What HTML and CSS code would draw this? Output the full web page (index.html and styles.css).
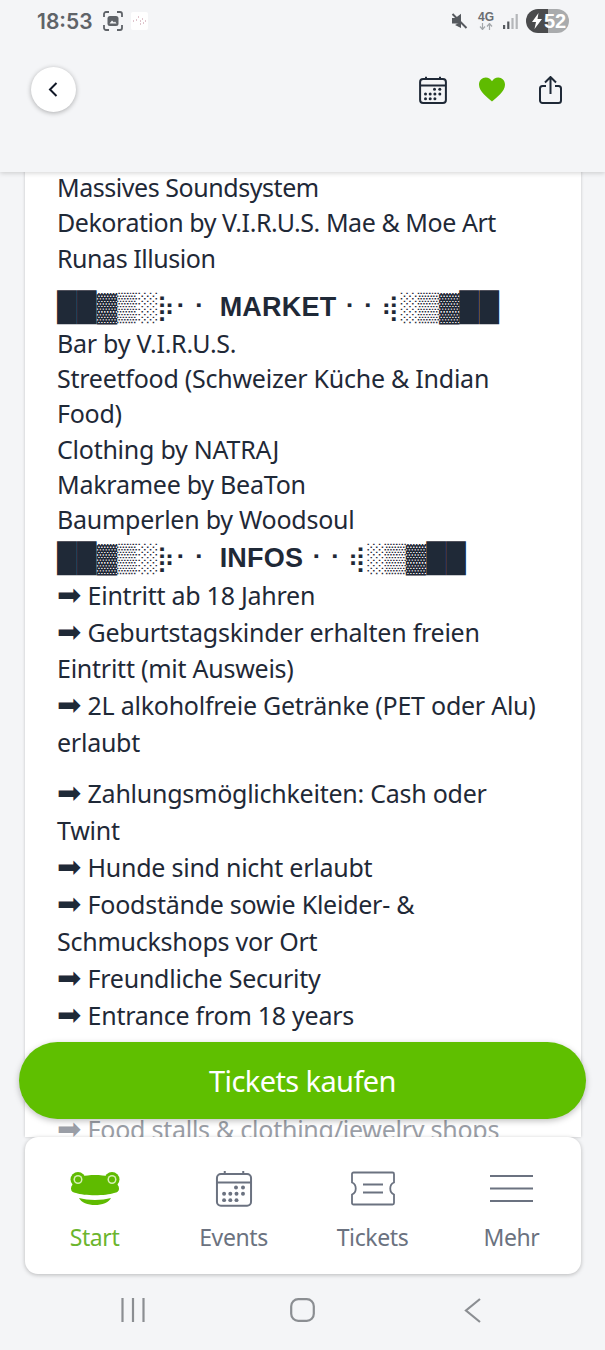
FILE: index.html
```html
<!DOCTYPE html>
<html lang="en">
<head>
    <meta charset="UTF-8">
    <meta name="viewport" content="width=device-width, initial-scale=1.0">
    <title>Event</title>
    <link rel="stylesheet" href="styles.css">
</head>
<body>
    <svg class="defs" width="0" height="0">
        <symbol id="calendar" viewBox="0 0 28 28">
            <rect x="1.1" y="3" width="25.8" height="24" rx="3" fill="none" stroke="currentColor" stroke-width="2" vector-effect="non-scaling-stroke"/>
            <path d="M1 9.5H27M7 .8V3M21 .8V3" fill="none" stroke="currentColor" stroke-width="2" vector-effect="non-scaling-stroke"/>
            <g fill="currentColor">
                <circle cx="15.5" cy="13.2" r="1.5"/><circle cx="20.8" cy="13.2" r="1.5"/>
                <circle cx="6.5" cy="18" r="1.5"/><circle cx="11.2" cy="18" r="1.5"/><circle cx="15.9" cy="18" r="1.5"/><circle cx="20.8" cy="18" r="1.5"/>
                <circle cx="6.5" cy="22.8" r="1.5"/><circle cx="11.2" cy="22.8" r="1.5"/><circle cx="15.9" cy="22.8" r="1.5"/>
            </g>
        </symbol>
    </svg>

    <header class="topbar">
        <div class="statusbar">
            <div class="status-left">
                <span class="time">18:53</span>
                <svg class="shot-icon" width="20" height="20" viewBox="0 0 20 20">
                    <path d="M1 6V3a2 2 0 0 1 2-2h3M14 1h3a2 2 0 0 1 2 2v3M19 14v3a2 2 0 0 1-2 2h-3M6 19H3a2 2 0 0 1-2-2v-3" fill="none" stroke="#5f6368" stroke-width="1.8"/>
                    <rect x="4.5" y="5" width="11" height="10" rx="2.5" fill="#5f6368"/>
                    <path d="M6.5 12.5l2.5-3 2 2 1-1 1.5 2z" fill="#f4f5f7"/>
                </svg>
                <svg class="thumb" width="17" height="18" viewBox="0 0 17 18">
                    <rect width="17" height="18" rx="2" fill="#fff"/>
                    <path d="M2 9h1M5 8h1M7 5h1M9 9h1M11 7h1M12 11h1M14 9h1M9 12h1" stroke="#c08a9a" stroke-width="1"/>
                </svg>
            </div>
            <div class="status-right">
                <svg width="17" height="16" viewBox="0 0 17 16">
                    <path d="M1 5h3.5L10 .8V11L4.5 10.5H1z" fill="#55595e"/>
                    <path d="M1.5 1l14 14" stroke="#55595e" stroke-width="2"/>
                    <path d="M4 12l6 3V9z" fill="#55595e"/>
                </svg>
                <div class="net">
                    <span class="net-label">4G</span>
                    <svg width="14" height="7" viewBox="0 0 14 7">
                        <path d="M3.5 0v6M1 3.5L3.5 6.5 6 3.5" fill="none" stroke="#a4a7aa" stroke-width="1.2"/>
                        <path d="M10.5 7V1M8 3.5L10.5 .5 13 3.5" fill="none" stroke="#a4a7aa" stroke-width="1.2"/>
                    </svg>
                </div>
                <svg width="15" height="15" viewBox="0 0 15 15">
                    <rect x="0" y="11" width="2.2" height="4" fill="#55595e"/>
                    <rect x="4.2" y="7.5" width="2.2" height="7.5" fill="#55595e"/>
                    <rect x="8.4" y="4" width="2.2" height="11" fill="#b4b6b9"/>
                    <rect x="12.6" y="0" width="2.2" height="15" fill="#b4b6b9"/>
                </svg>
                <div class="battery">
                    <svg width="10" height="16" viewBox="0 0 10 16"><path d="M6.5 0L0 9h4L2.5 16 10 6H5.5z" fill="#fff"/></svg>
                    <span class="battery-num">52</span>
                </div>
            </div>
        </div>
        <div class="toolbar">
            <button class="back-btn">
                <svg width="10" height="15" viewBox="0 0 10 15"><path d="M8.5 1L2 7.5 8.5 14" fill="none" stroke="#111827" stroke-width="2"/></svg>
            </button>
            <div class="toolbar-actions">
                <svg class="cal-dark" width="28" height="28"><use href="#calendar"/></svg>
                <svg class="heart" width="26" height="25" viewBox="0 0 27 25">
                    <path d="M13.5 25C9 20.500 0 15 0 7.500 0 3 3.200 0 7 0c2.800 0 5.200 1.500 6.500 4C14.800 1.500 17.200 0 20 0c3.800 0 7 3 7 7.500C27 15 18 20.500 13.500 25z" fill="#5fbb00"/>
                </svg>
                <svg class="share" width="23" height="28" viewBox="0 0 23 28">
                    <path d="M7 10H3.500A2.500 2.500 0 0 0 1 12.500v12A2.500 2.500 0 0 0 3.500 27h16a2.500 2.500 0 0 0 2.500-2.500v-12A2.500 2.500 0 0 0 19.500 10H16" fill="none" stroke="#1f2937" stroke-width="2"/>
                    <path d="M11.500 18V1.500M6 6.500l5.500-5.500L17 6.500" fill="none" stroke="#1f2937" stroke-width="2"/>
                </svg>
            </div>
        </div>
    </header>

    <main class="content">
        <article class="card">
            <p class="lines intro">
                Massives Soundsystem<br>
                Dekoration by V.I.R.U.S. Mae &amp; Moe Art<br>
                Runas Illusion
            </p>
            <h2 class="deco-title spaced">██▓▒░<span class="deco">⡷⠂⠂ </span><span class="deco-word">MARKET</span><span class="deco"> ⠂⠂⢾</span>░▒▓██</h2>
            <p class="lines">
                Bar by V.I.R.U.S.<br>
                Streetfood (Schweizer Küche &amp; Indian Food)<br>
                Clothing by NATRAJ<br>
                Makramee by BeaTon<br>
                Baumperlen by Woodsoul
            </p>
            <h2 class="deco-title">██▓▒░<span class="deco">⡷⠂⠂ </span><span class="deco-word">INFOS</span><span class="deco"> ⠂⠂⢾</span>░▒▓██</h2>
            <p class="lines infos">
                <span class="arrow">➡</span> Eintritt ab 18 Jahren<br>
                <span class="arrow">➡</span> Geburtstagskinder erhalten freien Eintritt (mit Ausweis)<br>
                <span class="arrow">➡</span> 2L alkoholfreie Getränke (PET oder Alu) erlaubt
            </p>
            <p class="lines infos">
                <span class="arrow">➡</span> Zahlungsmöglichkeiten: Cash oder Twint<br>
                <span class="arrow">➡</span> Hunde sind nicht erlaubt<br>
                <span class="arrow">➡</span> Foodstände sowie Kleider- &amp; Schmuckshops vor Ort<br>
                <span class="arrow">➡</span> Freundliche Security<br>
                <span class="arrow">➡</span> Entrance from 18 years
            </p>
            <p class="lines infos faded"><span class="arrow">➡</span> Food stalls &amp; clothing/jewelry shops</p>
        </article>
        <button class="buy-btn">Tickets kaufen</button>
    </main>

    <nav class="tabbar">
        <a class="tab active">
            <svg width="50" height="34" viewBox="0 0 50 34">
                <path d="M1 17C1 14 3 13 4 11L12 5C18 3 32 3 38 5L46 11C47 13 49 14 49 17C49 20 47 21 44 21.500C36 24.500 14 24.500 6 21.500C3 21 1 20 1 17Z" fill="#5fbb00"/>
                <circle cx="8" cy="8" r="7.500" fill="#5fbb00"/>
                <circle cx="42" cy="8" r="7.500" fill="#5fbb00"/>
                <circle cx="8" cy="8" r="4.500" fill="#d6efb5"/>
                <circle cx="42" cy="8" r="4.500" fill="#d6efb5"/>
                <circle cx="8" cy="8" r="3" fill="#5fbb00"/>
                <circle cx="42" cy="8" r="3" fill="#5fbb00"/>
                <path d="M9 26.500C18 29 32 29 41 26.500C39 31 32 33.500 25 33.500C18 33.500 11 31 9 26.500Z" fill="#5fbb00"/>
            </svg>
            <span>Start</span>
        </a>
        <a class="tab">
            <svg width="38" height="37"><use href="#calendar"/></svg>
            <span>Events</span>
        </a>
        <a class="tab">
            <svg width="44" height="34" viewBox="0 0 44 34">
                <path d="M2.500 1H41.500A1.500 1.500 0 0 1 43 2.500V11C38 13 38 21 43 23V31.500A1.500 1.500 0 0 1 41.500 33H2.500A1.500 1.500 0 0 1 1 31.500V23C6 21 6 13 1 11V2.500A1.500 1.500 0 0 1 2.500 1Z" fill="none" stroke="currentColor" stroke-width="1.800"/>
                <path d="M12 13H32M12 21H32" stroke="currentColor" stroke-width="1.800"/>
            </svg>
            <span>Tickets</span>
        </a>
        <a class="tab">
            <svg width="43" height="34" viewBox="0 0 43 34">
                <path d="M0 4.500H43M0 17H43M0 29.500H43" stroke="currentColor" stroke-width="2"/>
            </svg>
            <span>Mehr</span>
        </a>
    </nav>

    <div class="android-nav">
        <svg width="24" height="24" viewBox="0 0 24 24"><path d="M1.500 0V24M12 0V24M22.500 0V24" stroke="#8b8e92" stroke-width="2.200"/></svg>
        <svg width="25" height="24" viewBox="0 0 25 24"><rect x="1.200" y="1.200" width="22.600" height="21.600" rx="7" fill="none" stroke="#8b8e92" stroke-width="2.200"/></svg>
        <svg width="17" height="25" viewBox="0 0 17 25"><path d="M16 1L2 12.500 16 24" fill="none" stroke="#8b8e92" stroke-width="2.200"/></svg>
    </div>
</body>
</html>
```
FILE: styles.css
```css
* {
    box-sizing: border-box;
}
html, body {
    margin: 0;
    padding: 0;
    height: 1350px;
    overflow: hidden;
}
body {
    display: flex;
    flex-direction: column;
    background-color: #f4f5f7;
    font-family: 'Noto Sans', sans-serif;
    color: #1f2937;
}
.defs {
    position: absolute;
}

/* top */
.topbar {
    height: 172px;
    flex: none;
    background-color: #f4f5f7;
    box-shadow: 0 1px 5px rgba(0, 0, 0, 0.18);
    position: relative;
    z-index: 2;
}
.statusbar {
    height: 42px;
    display: flex;
    justify-content: space-between;
    align-items: center;
    padding: 0 36px 0 37px;
}
.status-left {
    display: flex;
    align-items: center;
}
.time {
    font-family: 'Inter', sans-serif;
    font-weight: 600;
    font-size: 21px;
    color: #5f6368;
}
.shot-icon {
    margin-left: 10px;
}
.thumb {
    margin-left: 8px;
}
.status-right {
    display: flex;
    align-items: center;
    gap: 9px;
}
.net {
    display: flex;
    flex-direction: column;
    align-items: center;
    margin-left: 1px;
}
.net-label {
    font-family: 'Liberation Sans', sans-serif;
    font-weight: 700;
    font-size: 12px;
    line-height: 11px;
    color: #6a6d71;
}
.battery {
    width: 43px;
    height: 24px;
    margin-left: -1px;
    border-radius: 12px;
    background: linear-gradient(90deg, #4a4b4d 0, #4a4b4d 22px, #a9abad 22px);
    display: flex;
    align-items: center;
    padding-left: 6px;
    color: #fff;
}
.battery-num {
    font-family: 'Liberation Sans', sans-serif;
    font-weight: 700;
    font-size: 20px;
    margin-left: 2px;
}
.toolbar {
    display: flex;
    justify-content: space-between;
    align-items: center;
    padding: 25px 43px 0 31px;
}
.back-btn {
    width: 45px;
    height: 45px;
    padding: 0 2px 0 0;
    border: none;
    border-radius: 50%;
    background-color: #fff;
    box-shadow: 0 1px 5px rgba(0, 0, 0, 0.3);
    display: flex;
    align-items: center;
    justify-content: center;
}
.toolbar-actions {
    display: flex;
    align-items: center;
    gap: 32px;
    padding-top: 1px;
}
.cal-dark {
    color: #1f2937;
}
.heart {
    margin-top: -2px;
}
.share {
    margin-left: 2px;
}

/* article */
.content {
    flex: 1;
    position: relative;
    min-height: 0;
}
.card {
    height: calc(100% + 2px);
    margin: -2px 24px 0 25px;
    padding: 0 40px 0 32px;
    background-color: #fff;
    box-shadow: 0 0 3px rgba(0, 0, 0, 0.2);
    overflow: hidden;
    font-size: 25px;
    letter-spacing: -0.25px;
}
.lines {
    margin: 0;
    line-height: 35.3px;
}
.intro {
    letter-spacing: -0.45px;
}
.infos {
    line-height: 36.9px;
    margin-bottom: 14px;
}
.arrow {
    font-family: 'DejaVu Sans', sans-serif;
    font-size: 29px;
    letter-spacing: 0;
}
.faded {
    margin-top: 77px;
    color: #9a9ea6;
}
.deco-title {
    margin: 0;
    height: 39px;
    font-family: 'Liberation Sans', sans-serif;
    font-size: 28px;
    font-weight: 700;
    line-height: 39px;
    letter-spacing: 0;
    white-space: nowrap;
}
.spaced {
    margin-top: 11px;
}
.deco {
    font-family: 'DejaVu Sans', sans-serif;
    font-size: 25px;
    font-weight: 400;
}
.deco-word {
    font-size: 27px;
    letter-spacing: 0.2px;
}
.buy-btn {
    position: absolute;
    left: 19px;
    right: 19px;
    bottom: 18px;
    height: 77px;
    padding-bottom: 2px;
    border: none;
    border-radius: 39px;
    background-color: #5fbf00;
    color: #fff;
    font-family: 'Noto Sans', sans-serif;
    font-size: 29px;
    letter-spacing: -0.6px;
    box-shadow: 0 2px 6px rgba(0, 0, 0, 0.25);
}

/* bottom */
.tabbar {
    flex: none;
    height: 137px;
    margin: 0 24px 0 25px;
    display: grid;
    grid-template-columns: repeat(4, 1fr);
    background-color: #fff;
    border-radius: 13px;
    box-shadow: 0 1px 4px rgba(0, 0, 0, 0.25);
    position: relative;
    z-index: 1;
}
.tab {
    display: flex;
    flex-direction: column;
    align-items: center;
    height: 100%;
    padding-top: 33px;
    color: #6b7280;
    font-size: 23px;
    letter-spacing: -0.4px;
}
.tab svg {
    height: 37px;
    flex: none;
}
.tab span {
    margin-top: 14px;
    line-height: 32px;
}
.tab.active {
    color: #6cb52d;
}
.android-nav {
    flex: none;
    height: 76px;
    display: grid;
    grid-template-columns: 170px 170px 170px;
    justify-content: center;
    justify-items: center;
    align-items: center;
    padding: 0 0 4px 0;
}
```
